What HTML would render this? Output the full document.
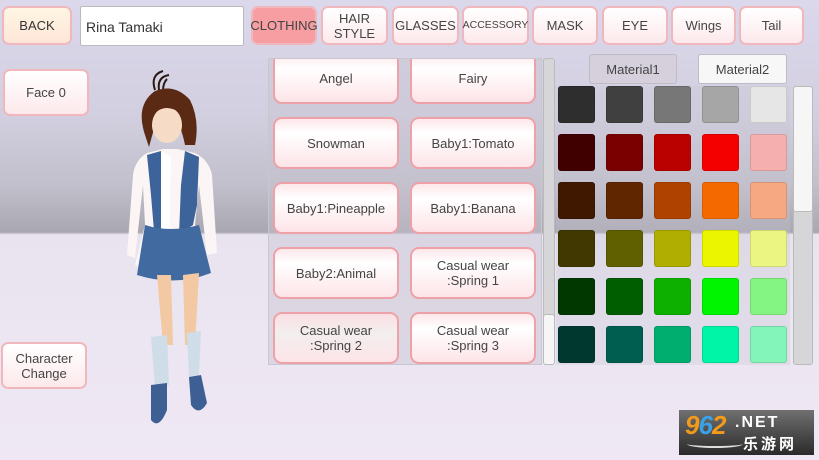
<!DOCTYPE html>
<html><head><meta charset="utf-8"><style>
*{margin:0;padding:0;box-sizing:border-box}
body{width:819px;height:460px;overflow:hidden;position:relative;font-family:"Liberation Sans",sans-serif;
background:linear-gradient(to bottom,#dcd8ec 0%,#d2cfe0 25%,#c2c0cc 40%,#a9a7b1 50.5%,#e9e3f0 51%,#efe8f4 100%)}
.b{position:absolute;display:flex;align-items:center;justify-content:center;text-align:center;color:#444;
background:linear-gradient(#fff,#fde9ec);border:2px solid #f0b8bc;border-radius:7px;font-size:13px;line-height:15px}
.tab{top:6px;height:39px}
.it{width:126px;height:52px;border-radius:9px;font-size:13px;background:linear-gradient(#fde7ea,#fff 30%,#fde4e8);border-color:#eea1a6}
.c{position:absolute;width:37px;height:37px;border-radius:3px;border:1px solid rgba(0,0,0,.12)}
</style></head><body>
<div class="b" style="left:2px;top:6px;width:70px;height:39px;background:linear-gradient(#fff5e3,#fde6d8);color:#333">BACK</div>
<div style="position:absolute;left:80px;top:6px;width:164px;height:40px;background:#fff;border:1px solid #bbb;border-radius:2px;font-size:14px;color:#333;padding:12px 5px">Rina Tamaki</div>
<div class="b tab" style="left:251px;width:66px;background:#f79ea2;color:#444">CLOTHING</div>
<div class="b tab" style="left:321px;width:67px;font-size:13px">HAIR<br>STYLE</div>
<div class="b tab" style="left:392px;width:67px">GLASSES</div>
<div class="b tab" style="left:462px;width:67px;font-size:10.5px">ACCESSORY</div>
<div class="b tab" style="left:532px;width:66px">MASK</div>
<div class="b tab" style="left:602px;width:66px">EYE</div>
<div class="b tab" style="left:671px;width:65px">Wings</div>
<div class="b tab" style="left:739px;width:65px">Tail</div>
<div class="b" style="left:3px;top:69px;width:86px;height:47px">Face 0</div>
<div class="b" style="left:1px;top:342px;width:86px;height:47px">Character<br>Change</div>

<svg style="position:absolute;left:115px;top:65px" width="110" height="370" viewBox="0 0 110 370">
<path d="M40 25 Q35 10 48 6 M44 25 Q42 12 54 10 M48 26 Q48 18 52 14" stroke="#2a1a12" stroke-width="2" fill="none"/>
<path d="M30 70 Q20 40 40 26 Q60 18 75 35 Q85 55 80 80 L70 80 Q66 60 60 55 L40 60 L34 82Z" fill="#5a2a15"/>
<ellipse cx="52" cy="60" rx="15" ry="18" fill="#f6dcc6"/>
<path d="M36 52 Q50 35 68 50 L66 42 Q52 30 38 42Z" fill="#5a2a15"/>
<path d="M32 88 Q20 95 18 110 L12 190 L20 193 L28 120 L30 160 L20 200 Q50 210 88 196 L80 160 L84 120 L92 190 L102 188 L97 110 Q94 95 80 88 L62 84 L48 84Z" fill="#fbf5f6"/>
<path d="M32 90 L46 86 L52 130 L48 180 L40 178 L36 130Z M70 86 L84 92 L82 140 L78 160 L64 170 L66 120Z" fill="#3d639b"/>
<path d="M46 86 L56 92 L54 180 L46 178Z" fill="#fff"/>
<path d="M30 160 Q55 168 84 160 L96 208 Q60 222 22 210Z" fill="#416aa0"/>
<path d="M42 210 L48 280 L58 280 L56 210Z M68 210 L70 280 L80 280 L84 208Z" fill="#f2c9a3"/>
<path d="M36 272 L52 270 L54 320 L40 322Z M72 268 L86 266 L84 310 L74 312Z" fill="#cfdde8"/>
<path d="M36 320 L52 318 L52 345 Q44 365 36 355Z M74 312 L86 310 L92 338 Q84 352 76 340Z" fill="#3d5f93"/>
</svg>

<div style="position:absolute;left:268px;top:58px;width:274px;height:307px;background:rgba(200,196,208,.45);border:1px solid #c8c6ce;overflow:hidden">
<div class="b it" style="left:4px;top:-7px">Angel</div>
<div class="b it" style="left:141px;top:-7px">Fairy</div>
<div class="b it" style="left:4px;top:58px">Snowman</div>
<div class="b it" style="left:141px;top:58px">Baby1:Tomato</div>
<div class="b it" style="left:4px;top:123px">Baby1:Pineapple</div>
<div class="b it" style="left:141px;top:123px">Baby1:Banana</div>
<div class="b it" style="left:4px;top:188px">Baby2:Animal</div>
<div class="b it" style="left:141px;top:188px">Casual wear<br>:Spring 1</div>
<div class="b it" style="left:4px;top:253px;background:linear-gradient(#fbdfe3,#f3eeee 40%,#fde4e8)">Casual wear<br>:Spring 2</div>
<div class="b it" style="left:141px;top:253px">Casual wear<br>:Spring 3</div>
</div>
<div style="position:absolute;left:543px;top:58px;width:12px;height:307px;background:#d6d5d8;border:1px solid #bbb;border-radius:3px"></div>
<div style="position:absolute;left:543px;top:314px;width:12px;height:51px;background:#f6f6f6;border:1px solid #bbb;border-radius:3px"></div>

<div style="position:absolute;left:589px;top:54px;width:88px;height:30px;background:#d5d0dc;border:1px solid #c0bcc6;border-radius:3px;font-size:13px;color:#444;display:flex;align-items:center;justify-content:center">Material1</div>
<div style="position:absolute;left:698px;top:54px;width:89px;height:30px;background:#f7f7f7;border:1px solid #c0bcc6;border-radius:3px;font-size:13px;color:#444;display:flex;align-items:center;justify-content:center">Material2</div>
<div style="position:absolute;left:556px;top:86px;width:234px;height:279px;background:rgba(200,196,208,.3)"></div>

<div class="c" style="left:558px;top:86px;background:#2e2e2e"></div><div class="c" style="left:606px;top:86px;background:#404040"></div><div class="c" style="left:654px;top:86px;background:#777"></div><div class="c" style="left:702px;top:86px;background:#a6a6a6"></div><div class="c" style="left:750px;top:86px;background:#e6e6e6"></div>
<div class="c" style="left:558px;top:134px;background:#400000"></div><div class="c" style="left:606px;top:134px;background:#7a0000"></div><div class="c" style="left:654px;top:134px;background:#bb0000"></div><div class="c" style="left:702px;top:134px;background:#f50000"></div><div class="c" style="left:750px;top:134px;background:#f5afaf"></div>
<div class="c" style="left:558px;top:182px;background:#401800"></div><div class="c" style="left:606px;top:182px;background:#602600"></div><div class="c" style="left:654px;top:182px;background:#b04200"></div><div class="c" style="left:702px;top:182px;background:#f56a00"></div><div class="c" style="left:750px;top:182px;background:#f5a882"></div>
<div class="c" style="left:558px;top:230px;background:#403800"></div><div class="c" style="left:606px;top:230px;background:#606000"></div><div class="c" style="left:654px;top:230px;background:#b0ae00"></div><div class="c" style="left:702px;top:230px;background:#ebf500"></div><div class="c" style="left:750px;top:230px;background:#ebf582"></div>
<div class="c" style="left:558px;top:278px;background:#003800"></div><div class="c" style="left:606px;top:278px;background:#005d00"></div><div class="c" style="left:654px;top:278px;background:#0eb000"></div><div class="c" style="left:702px;top:278px;background:#00f500"></div><div class="c" style="left:750px;top:278px;background:#84f582"></div>
<div class="c" style="left:558px;top:326px;background:#003830"></div><div class="c" style="left:606px;top:326px;background:#005e50"></div><div class="c" style="left:654px;top:326px;background:#00ae70"></div><div class="c" style="left:702px;top:326px;background:#00f5a6"></div><div class="c" style="left:750px;top:326px;background:#84f5ba"></div>

<div style="position:absolute;left:793px;top:86px;width:20px;height:279px;background:#d6d5d8;border:1px solid #bbb;border-radius:3px"></div>
<div style="position:absolute;left:793px;top:86px;width:20px;height:126px;background:#f6f6f6;border:1px solid #bbb;border-radius:3px"></div>

<div style="position:absolute;left:679px;top:410px;width:135px;height:45px;background:linear-gradient(#707070,#2a2a2a);overflow:hidden">
<div style="position:absolute;left:6px;top:0px;font:italic bold 26px 'Liberation Sans',sans-serif;color:#f29a1a;letter-spacing:-1px">9<span style="color:#3aa0e8">6</span>2</div>
<div style="position:absolute;left:56px;top:4px;font:bold 16px 'Liberation Sans',sans-serif;color:#fff;letter-spacing:2px">.NET</div>
<div style="position:absolute;left:64px;top:23px;font:bold 15px 'Noto Sans CJK SC',sans-serif;color:#fff;letter-spacing:3px">乐游网</div>
<div style="position:absolute;left:8px;top:30px;width:56px;height:8px;border-bottom:2px solid #ddd;border-radius:0 0 50% 50%"></div>
</div>
</body></html>
